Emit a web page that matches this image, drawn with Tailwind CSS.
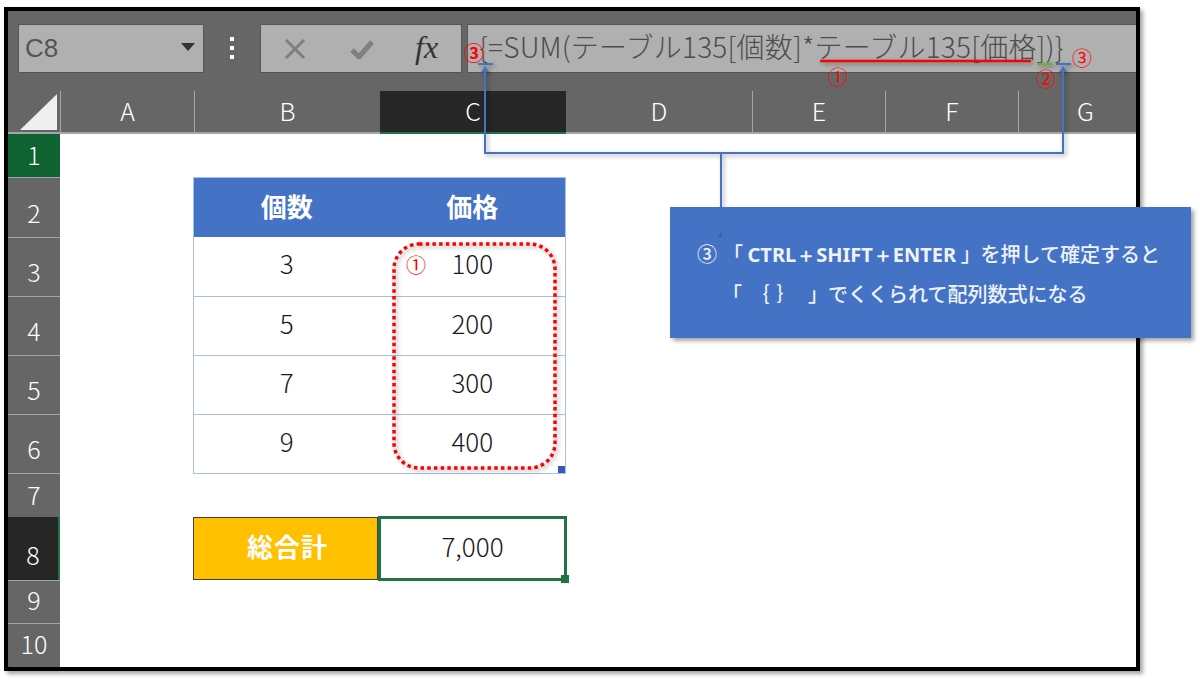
<!DOCTYPE html>
<html lang="ja">
<head>
<meta charset="UTF-8">
<title>配列数式</title>
<script src="https://cdn.jsdelivr.net/npm/@tailwindcss/browser@4"></script>
</head>
<body class="bg-white w-[1200px] h-[682px] overflow-hidden relative font-['Noto_Sans_CJK_JP','Noto_Sans',sans-serif]">
  <div class="pt-[7px] pl-[4px]">
    <!-- frame -->
    <div class="w-[1136px] h-[664px] border-4 border-black bg-white shadow-[3px_3px_4px_rgba(0,0,0,0.35)] flex flex-col overflow-hidden">
      <!-- formula bar -->
      <div class="h-[80px] bg-[#666666] flex pt-[13px] pl-[10px] shrink-0">
        <div class="w-[186px] h-[49px] bg-[#b0b0b0] border border-[#555] flex items-center justify-between pl-[6px] pr-[8px]">
          <span class="text-[26px] text-[#555] font-['Liberation_Sans',sans-serif]">C8</span>
          <svg class="mb-[4px]" width="14" height="8" viewBox="0 0 14 8"><path d="M0 0h14L7 8z" fill="#333"/></svg>
        </div>
        <div class="w-[56px] h-[49px] flex flex-col items-center justify-center gap-[5px] pb-[2px]">
          <div class="w-[4px] h-[4px] bg-white"></div>
          <div class="w-[4px] h-[4px] bg-white"></div>
          <div class="w-[4px] h-[4px] bg-white"></div>
        </div>
        <div class="w-[202px] h-[49px] bg-[#b0b0b0] border border-[#555] flex items-center">
          <svg class="ml-[23px]" width="22" height="22" viewBox="0 0 22 22"><path d="M2 2l18 18M20 2L2 20" stroke="#7f7f7f" stroke-width="3" fill="none"/></svg>
          <svg class="ml-[44px]" width="24" height="20" viewBox="0 0 24 20"><path d="M2 11l7 7L22 3" stroke="#7f7f7f" stroke-width="5" fill="none"/></svg>
          <span class="ml-[41px] text-[32px] leading-none italic text-[#333] font-['Liberation_Serif',serif] pb-[4px]">fx</span>
        </div>
        <div class="ml-[5px] flex-1 h-[49px] bg-[#b0b0b0] border-l border-y border-[#555] flex items-center pl-[11px]">
          <span class="text-[28px] font-light text-[#4d4d4d] whitespace-nowrap tracking-[0.2px] pb-[5px]">{=SUM(テーブル135[個数]*テーブル135[価格])}</span>
        </div>
      </div>

      <!-- column headers -->
      <div class="h-[43px] bg-[#666666] flex shrink-0 text-white text-[25px] font-light">
        <div class="w-[52px] relative border-b-2 border-[#a6a6a6]">
          <svg class="absolute right-[3px] bottom-[2px]" width="37" height="36" viewBox="0 0 37 36"><path d="M37 0v36H0z" fill="#efefef"/></svg>
        </div>
        <div class="w-[134px] border-b-2 border-[#a6a6a6] border-l border-l-[#a6a6a6] flex items-center justify-center pb-[2px]">A</div>
        <div class="w-[186px] border-b-2 border-[#a6a6a6] border-l border-l-[#a6a6a6] flex items-center justify-center pb-[2px]">B</div>
        <div class="w-[186px] border-b-2 border-[#217346] bg-[#262626] flex items-center justify-center pb-[2px]">C</div>
        <div class="w-[186px] border-b-2 border-[#a6a6a6] flex items-center justify-center pb-[2px]">D</div>
        <div class="w-[133px] border-b-2 border-[#a6a6a6] border-l border-l-[#a6a6a6] flex items-center justify-center pb-[2px]">E</div>
        <div class="w-[133px] border-b-2 border-[#a6a6a6] border-l border-l-[#a6a6a6] flex items-center justify-center pb-[2px]">F</div>
        <div class="flex-1 border-b-2 border-[#a6a6a6] border-l border-l-[#a6a6a6] flex items-center justify-center pl-[16px] pb-[2px]">G</div>
      </div>

      <!-- sheet -->
      <div class="flex flex-1 min-h-0">
        <div class="w-[52px] shrink-0 bg-[#666666] text-white text-[25px] font-light leading-[28px] flex flex-col text-center">
          <div class="h-[43px] bg-[#0f6330] flex items-end justify-center pb-[9px]">1</div>
          <div class="h-[60px] border-t border-[#a6a6a6] flex items-end justify-center pb-[11px]">2</div>
          <div class="h-[59px] border-t border-[#a6a6a6] flex items-end justify-center pb-[11px]">3</div>
          <div class="h-[59px] border-t border-[#a6a6a6] flex items-end justify-center pb-[11px]">4</div>
          <div class="h-[59px] border-t border-[#a6a6a6] flex items-end justify-center pb-[11px]">5</div>
          <div class="h-[59px] border-t border-[#a6a6a6] flex items-end justify-center pb-[11px]">6</div>
          <div class="h-[44px] border-t border-[#a6a6a6] flex items-end justify-center pb-[9px]">7</div>
          <div class="h-[63px] bg-[#262626] border-r-2 border-[#217346] flex items-end justify-center pb-[12px]">8</div>
          <div class="h-[43px] border-t border-[#a6a6a6] flex items-end justify-center pb-[10px]">9</div>
          <div class="flex-1 border-t border-[#a6a6a6] flex items-end justify-center pb-[10px]">10</div>
        </div>
        <div class="flex-1 pl-[133px] pt-[43px] text-[#1a1a1a] text-[26px] font-light">
          <!-- table -->
          <div class="w-[373px] border border-[#a9bfe6] relative">
            <div class="grid grid-cols-2 h-[59px] bg-[#4472c4] text-white font-bold text-[26px] items-center text-center pb-[5px]">
              <div>個数</div><div>価格</div>
            </div>
            <div class="grid grid-cols-2 h-[59px] items-center text-center pb-[8px]"><div>3</div><div>100</div></div>
            <div class="grid grid-cols-2 h-[59px] items-center text-center pb-[8px] border-t border-[#a9bfe6]"><div>5</div><div>200</div></div>
            <div class="grid grid-cols-2 h-[59px] items-center text-center pb-[8px] border-t border-[#a9bfe6]"><div>7</div><div>300</div></div>
            <div class="grid grid-cols-2 h-[59px] items-center text-center pb-[8px] border-t border-[#a9bfe6]"><div>9</div><div>400</div></div>
            <div class="absolute right-0 bottom-0 w-[7px] h-[7px] bg-[#4056b4]"></div>
          </div>
          <!-- total -->
          <div class="flex mt-[43px] h-[63px]">
            <div class="w-[185px] bg-[#ffc000] border border-[#404040] text-white font-bold text-[26px] tracking-[1px] flex items-center justify-center pl-[4px] pb-[7px]">総合計</div>
            <div class="w-[189px] border-[3px] border-[#217346] flex items-center justify-center pb-[7px] relative -mt-px h-[65px]">
              7,000
              <div class="absolute -right-[5px] -bottom-[5px] w-[8px] h-[8px] bg-[#217346]"></div>
            </div>
          </div>
        </div>
      </div>
    </div>
  </div>

  <!-- annotations on top -->
  <svg class="absolute left-0 top-0 drop-shadow-[2px_2px_2px_rgba(0,0,0,0.35)]" width="1200" height="682" viewBox="0 0 1200 682" fill="none">
    <path d="M485 70V153H1063V70" stroke="#4472c4" stroke-width="2"/>
    <path d="M485 66l-4 6h8zM1063 66l-4 6h8z" fill="#4472c4"/>
    <path d="M721 153V234" stroke="#4472c4" stroke-width="2"/>
    <path d="M478 64h15M1056 64h15" stroke="#4472c4" stroke-width="2"/>
    <path d="M820 61h211" stroke="#ff0000" stroke-width="2.5"/>
    <path d="M1037 64h16" stroke="#70ad47" stroke-width="2.5"/>
    <rect x="394" y="244" width="161" height="224" rx="25" stroke="#ff0000" stroke-width="3.5" stroke-dasharray="3.5 3.2"/>
  </svg>

  <span class="absolute left-[464px] top-[41px] text-[20px] leading-[24px] text-[#ff0000] font-bold">③</span>
  <span class="absolute left-[1072px] top-[46px] text-[20px] leading-[24px] text-[#ff0000]">③</span>
  <span class="absolute left-[828px] top-[65px] text-[20px] leading-[24px] text-[#ff0000]">①</span>
  <span class="absolute left-[1036px] top-[67px] text-[20px] leading-[24px] text-[#ff0000]">②</span>
  <span class="absolute left-[406px] top-[253px] text-[20px] leading-[24px] text-[#ff0000]">①</span>

  <!-- callout -->
  <div class="absolute left-[670px] top-[207px] w-[521px] h-[131px] bg-[#4472c4] shadow-[3px_3px_4px_rgba(0,0,0,0.35)] text-[#eef2fa] text-[20px] leading-[39px] font-medium pt-[27px] pl-[27px] whitespace-nowrap">
    <div>③<span class="ml-[6px]">「</span> <b class="font-bold font-['Noto_Sans',sans-serif]">CTRL＋SHIFT＋ENTER</b> 」を押して確定すると</div>
    <div class="pl-[25px]">「 <span class="tracking-[7px] ml-[3px]">｛｝</span> 」でくくられて配列数式になる</div>
  </div>
  <svg class="absolute left-[716px] top-[207px]" width="10" height="30" viewBox="0 0 10 30" fill="none"><path d="M5 0V28" stroke="#4472c4" stroke-width="2"/><path d="M1 30l4-5 1 5z" fill="#3a62aa"/></svg>
</body>
</html>
